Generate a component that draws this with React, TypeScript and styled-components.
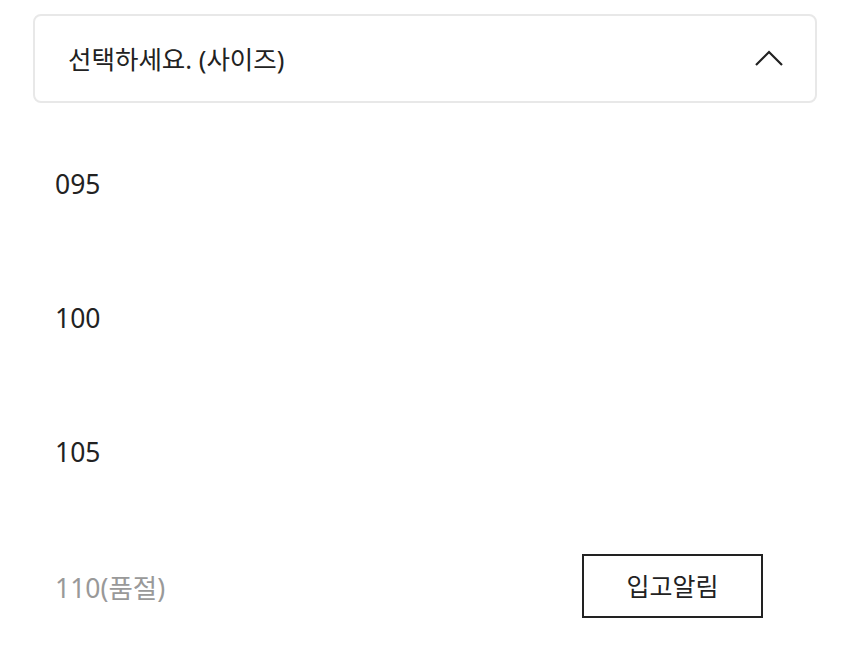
import React from 'react';
import styled, { createGlobalStyle } from 'styled-components';

const GlobalStyle = createGlobalStyle`
    body {
        margin: 0;
        background: #fff;
        font-family: "Noto Sans", "Noto Sans CJK KR", sans-serif;
        color: #222;
    }
`;

const Page = styled.div`
    padding: 14px 33px 0;
`;

const Select = styled.div`
    display: flex;
    align-items: center;
    justify-content: space-between;
    height: 89px;
    box-sizing: border-box;
    padding: 0 31px 2px 33px;
    border: 2px solid #e8e8e8;
    border-radius: 8px;
    font-size: 25.5px;
    color: #222;
`;

const OptionList = styled.ul`
    list-style: none;
    margin: 14px 0 0;
    padding: 0;
`;

const OptionRow = styled.li<{ $soldOut?: boolean }>`
    display: flex;
    align-items: center;
    justify-content: space-between;
    height: 134px;
    padding: 0 54px 0 22px;
    font-size: 26.5px;
    color: ${(props) => (props.$soldOut ? '#999' : '#222')};
`;

const NotifyButton = styled.button`
    width: 181px;
    height: 64px;
    padding: 0 0 2px;
    border: 2px solid #222;
    background: #fff;
    font-family: inherit;
    font-size: 25px;
    color: #222;
    cursor: pointer;
`;

const sizes = [
    { label: '095', soldOut: false },
    { label: '100', soldOut: false },
    { label: '105', soldOut: false },
    { label: '110(품절)', soldOut: true },
];

function ChevronUp() {
    return (
        <svg width="30" height="18" viewBox="0 0 30 18" fill="none">
            <path d="M2 16 L15 3 L28 16" stroke="#222" strokeWidth="2.2" />
        </svg>
    );
}

function App() {
    return (
        <Page>
            <GlobalStyle />
            <Select>
                <span>선택하세요. (사이즈)</span>
                <ChevronUp />
            </Select>
            <OptionList>
                {sizes.map((size) => (
                    <OptionRow key={size.label} $soldOut={size.soldOut}>
                        <span>{size.label}</span>
                        {size.soldOut && <NotifyButton>입고알림</NotifyButton>}
                    </OptionRow>
                ))}
            </OptionList>
        </Page>
    );
}

export default App;
